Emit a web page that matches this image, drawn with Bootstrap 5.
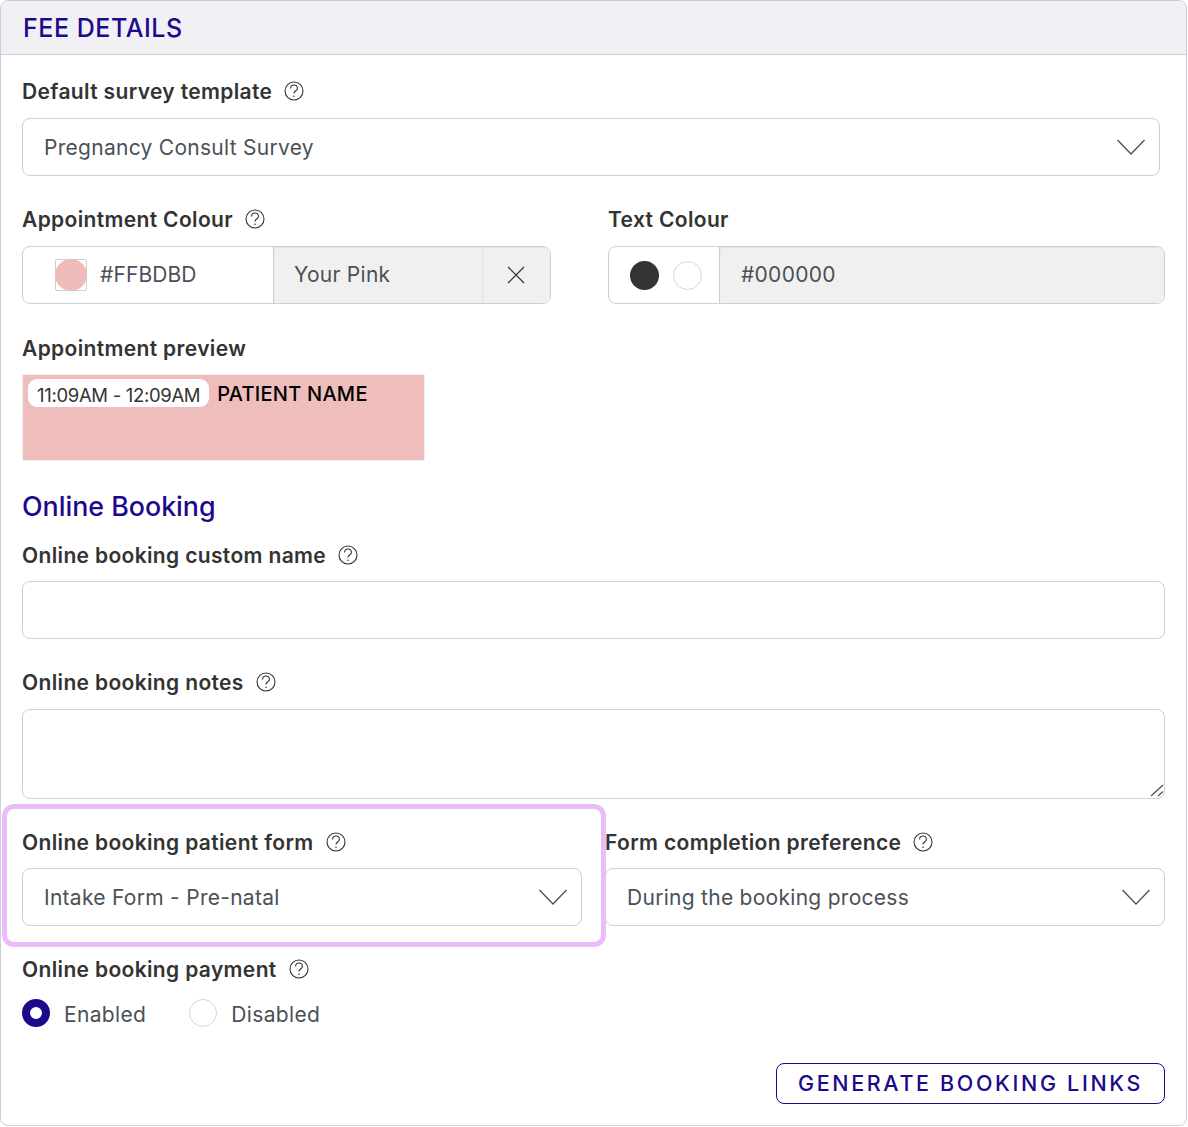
<!DOCTYPE html>
<html lang="en">
<head>
    <meta charset="UTF-8">
    <meta name="viewport" content="width=device-width, initial-scale=1.0">
    <title>Fee Details</title>
    <link href="https://cdn.jsdelivr.net/npm/bootstrap@5.3.0/dist/css/bootstrap.min.css" rel="stylesheet">
    <style>
        body {
            font-family: Inter, "Liberation Sans", sans-serif;
            color: #333;
            background: #fff;
        }
        .fee-card {
            width: 1187px;
            height: 1126px;
            border: 1px solid #ccd0d6;
            border-radius: 8px;
            overflow: hidden;
        }
        .fee-head {
            height: 54px;
            background: #f0f0f5;
            border-bottom: 1px solid #ccd0d6;
            padding: 0 22px;
            color: #1b0a8c;
            font-size: 25px;
            font-weight: 500;
            letter-spacing: .55px;
            line-height: 54px;
        }
        .fee-body { padding: 0 21px; }
        .fld-label {
            display: flex;
            align-items: center;
            height: 27px;
            margin: 0;
            font-size: 21px;
            font-weight: 600;
            letter-spacing: .35px;
            color: #333;
        }
        .fld-label svg { margin-left: 12px; margin-top: -2px; }
        .fld-box {
            height: 58px;
            border: 1px solid #ccd0d6;
            border-radius: 8px;
            display: flex;
            align-items: center;
            font-size: 21px;
            letter-spacing: .28px;
            color: #4b5057;
            background: #fff;
        }
        .pick-box span { padding-top: 2px; }
        .pick-box {
            justify-content: space-between;
            padding: 0 14px 0 21px;
        }
        .colour-left {
            width: 251px;
            height: 100%;
            display: flex;
            align-items: center;
            padding-left: 32px;
            gap: 13px;
            letter-spacing: .1px;
            border-right: 1px solid #ccd0d6;
        }
        .swatch-square {
            width: 32px;
            height: 32px;
            border: 1px solid #ccd0d6;
            border-radius: 2px;
        }
        .swatch-round {
            width: 32px;
            height: 32px;
            margin: -1px;
            border-radius: 50%;
            background: #efbcbc;
        }
        .colour-name {
            flex: 1;
            height: 100%;
            display: flex;
            align-items: center;
            padding-left: 20px;
            background: #f0f0f0;
            border-right: 1px solid #e8e8e8;
            box-shadow: inset 0 1px 2px rgba(0, 0, 0, .07);
        }
        .colour-clear {
            width: 67px;
            height: 100%;
            display: flex;
            align-items: center;
            justify-content: center;
            padding-right: 2px;
            background: #f0f0f0;
            box-shadow: inset 0 1px 2px rgba(0, 0, 0, .07);
        }
        .text-dots {
            width: 111px;
            height: 100%;
            display: flex;
            align-items: center;
            padding-left: 21px;
            gap: 14px;
            border-right: 1px solid #ccd0d6;
        }
        .dot-dark, .dot-light {
            width: 29px;
            height: 29px;
            border-radius: 50%;
        }
        .dot-dark { background: #333; }
        .dot-light { border: 1px solid #d5d7dc; background: #fff; }
        .text-hex {
            flex: 1;
            height: 100%;
            display: flex;
            align-items: center;
            padding-left: 21px;
            background: #f0f0f0;
            box-shadow: inset 0 1px 2px rgba(0, 0, 0, .07);
        }
        .appt-preview {
            width: 403px;
            height: 87px;
            background: #f0bdbd;
            border: 1px solid #f0f0f0;
            padding: 4px 5px;
            display: flex;
            align-items: flex-start;
            gap: 8px;
        }
        .appt-time {
            background: #fff;
            border-radius: 9px;
            height: 28px;
            padding: 0 9px;
            line-height: 33px;
            font-size: 18.5px;
            color: #333;
            letter-spacing: -.32px;
        }
        .appt-name {
            font-size: 20px;
            font-weight: 500;
            letter-spacing: .25px;
            color: #000;
            line-height: 30px;
        }
        .sect-title {
            font-size: 26.8px;
            font-weight: 500;
            color: #1b0a8c;
            line-height: 36px;
            margin: 0;
        }
        .notes-wrap { position: relative; }
        .notes-box {
            display: block;
            width: 100%;
            height: 90px;
            border: 1px solid #ccd0d6;
            border-radius: 8px;
            resize: none;
        }
        .notes-grip {
            position: absolute;
            right: 1px;
            bottom: 2px;
        }
        .form-rows { position: relative; }
        .form-ring {
            position: absolute;
            left: -20px;
            top: -25px;
            width: 604px;
            height: 143px;
            border: 5px solid #e9bdf9;
            border-radius: 12px;
            pointer-events: none;
        }
        .radio-dot {
            width: 28px;
            height: 28px;
            border-radius: 50%;
            border: 1px solid #d5d7dc;
            background: #fff;
        }
        .radio-dot.is-on { border: 8.5px solid #1b0a8c; }
        .radio-text { font-size: 21px; letter-spacing: .35px; color: #4b5057; padding-top: 4px; }
        .gen-btn {
            width: 389px;
            height: 41px;
            border: 1px solid #1b0a8c;
            border-radius: 8px;
            background: #fff;
            color: #1b0a8c;
            font-size: 21.5px;
            font-weight: 500;
            letter-spacing: 2.65px;
            padding: 0;
        }
    </style>
</head>
<body>
    <svg class="d-none">
        <symbol id="ico-help" viewBox="0 0 20 20">
            <circle cx="10" cy="10" r="9" fill="none" stroke="#333" stroke-width="1.1"/>
            <path d="M6.6 7.400a3.400 3.400 0 0 1 6.800 0c0 2.400-3.400 2.400-3.400 5.200" fill="none" stroke="#333" stroke-width="1.1"/>
            <circle cx="10" cy="15.200" r=".8" fill="#333"/>
        </symbol>
        <symbol id="ico-down" viewBox="0 0 28 16">
            <path d="M.5 1 14 15 27.5 1" fill="none" stroke="#4b5057" stroke-width="1.3"/>
        </symbol>
    </svg>

    <div class="fee-card">
        <div class="fee-head">FEE DETAILS</div>
        <div class="fee-body">
            <label class="fld-label" style="margin-top:23px">Default survey template <svg width="20" height="20"><use href="#ico-help"/></svg></label>
            <div class="fld-box pick-box" style="width:1138px;margin-top:13px">
                <span>Pregnancy Consult Survey</span>
                <svg width="28" height="16"><use href="#ico-down"/></svg>
            </div>

            <div class="d-flex" style="gap:57px;margin-top:30px">
                <div style="width:529px">
                    <label class="fld-label">Appointment Colour <svg width="20" height="20"><use href="#ico-help"/></svg></label>
                    <div class="fld-box overflow-hidden" style="margin-top:13px">
                        <div class="colour-left">
                            <div class="swatch-square"><div class="swatch-round"></div></div>
                            <span>#FFBDBD</span>
                        </div>
                        <div class="colour-name">Your Pink</div>
                        <div class="colour-clear">
                            <svg width="18" height="18" viewBox="0 0 18 18"><path d="M1 1 17 17M17 1 1 17" stroke="#333" stroke-width="1.2"/></svg>
                        </div>
                    </div>
                </div>
                <div style="width:557px">
                    <label class="fld-label">Text Colour</label>
                    <div class="fld-box overflow-hidden" style="margin-top:13px">
                        <div class="text-dots">
                            <div class="dot-dark"></div>
                            <div class="dot-light"></div>
                        </div>
                        <div class="text-hex">#000000</div>
                    </div>
                </div>
            </div>

            <label class="fld-label" style="margin-top:31px">Appointment preview</label>
            <div class="appt-preview" style="margin-top:12px">
                <span class="appt-time">11:09AM - 12:09AM</span>
                <span class="appt-name">PATIENT NAME</span>
            </div>

            <h2 class="sect-title" style="margin-top:27px">Online Booking</h2>

            <label class="fld-label" style="margin-top:18px">Online booking custom name <svg width="20" height="20"><use href="#ico-help"/></svg></label>
            <div class="fld-box" style="margin-top:12px"></div>

            <label class="fld-label" style="margin-top:30px">Online booking notes <svg width="20" height="20"><use href="#ico-help"/></svg></label>
            <div class="notes-wrap" style="margin-top:13px">
                <textarea class="notes-box"></textarea>
                <svg class="notes-grip" width="14" height="14" viewBox="0 0 14 14"><path d="M1 13 13 2M8 13 13 8.500" stroke="#555" stroke-width="1.3" fill="none"/></svg>
            </div>

            <div class="form-rows d-flex" style="margin-top:30px;gap:23px">
                <div class="form-ring"></div>
                <div style="width:560px">
                    <label class="fld-label">Online booking patient form <svg width="20" height="20"><use href="#ico-help"/></svg></label>
                    <div class="fld-box pick-box" style="margin-top:12px">
                        <span>Intake Form - Pre-natal</span>
                        <svg width="28" height="16"><use href="#ico-down"/></svg>
                    </div>
                </div>
                <div style="width:560px">
                    <label class="fld-label">Form completion preference <svg width="20" height="20"><use href="#ico-help"/></svg></label>
                    <div class="fld-box pick-box" style="margin-top:12px">
                        <span>During the booking process</span>
                        <svg width="28" height="16"><use href="#ico-down"/></svg>
                    </div>
                </div>
            </div>

            <label class="fld-label" style="margin-top:30px">Online booking payment <svg width="20" height="20"><use href="#ico-help"/></svg></label>
            <div class="d-flex align-items-center" style="margin-top:12px">
                <div class="radio-dot is-on"></div>
                <span class="radio-text" style="margin-left:14px">Enabled</span>
                <div class="radio-dot" style="margin-left:43px"></div>
                <span class="radio-text" style="margin-left:14px">Disabled</span>
            </div>

            <div class="d-flex justify-content-end" style="margin-top:32px">
                <button type="button" class="gen-btn">GENERATE BOOKING LINKS</button>
            </div>
        </div>
    </div>

    <script src="https://cdn.jsdelivr.net/npm/bootstrap@5.3.0/dist/js/bootstrap.bundle.min.js"></script>
</body>
</html>
